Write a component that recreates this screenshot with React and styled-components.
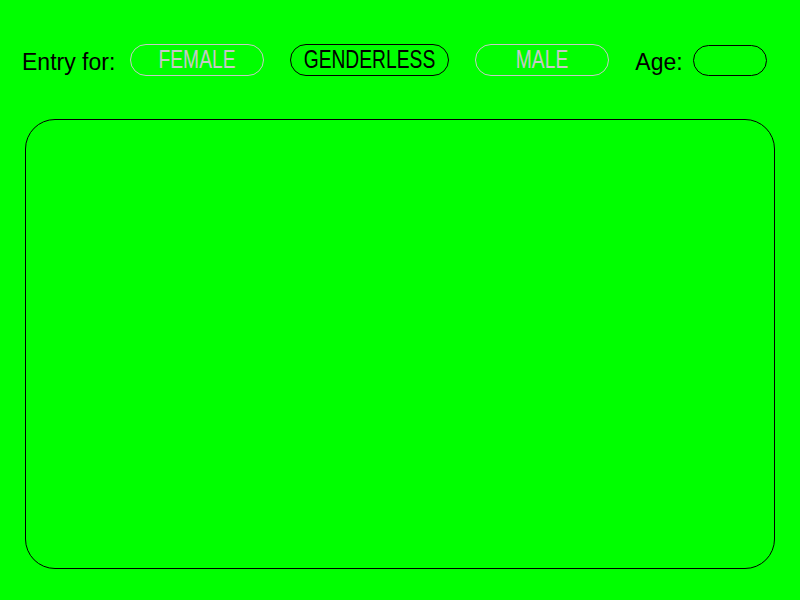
import React from "react";
import styled, { createGlobalStyle } from "styled-components";

const Global = createGlobalStyle`
  html, body { margin: 0; padding: 0; background: #00ff00; }
  body { font-family: "Liberation Sans", Arial, sans-serif; }
`;

const Page = styled.div`
  width: 800px;
  height: 600px;
  box-sizing: border-box;
  padding: 44px 0 0 22px;
  background: #00ff00;
  display: flex;
  flex-direction: column;
`;

const Header = styled.div`
  display: flex;
  align-items: center;
  height: 32px;
`;

const Label = styled.span`
  font-family: "Liberation Sans", Arial, sans-serif;
  font-size: 23px;
  color: #000;
  margin-right: ${(p) => p.$gap}px;
  position: relative;
  top: 2px;
  line-height: 1;
`;

const Choice = styled.button`
  box-sizing: border-box;
  width: ${(p) => p.$w}px;
  height: 32px;
  margin-right: 26px;
  border-radius: 16px;
  background: transparent;
  border: 1px solid ${(p) => (p.$active ? "#000" : "#c8c8c8")};
  color: ${(p) => (p.$active ? "#000" : "#c8c8c8")};
  font-family: "Liberation Sans", Arial, sans-serif;
  font-size: 25px;
  line-height: 1;
  padding: 0 0 1px;
  display: flex;
  align-items: center;
  justify-content: center;
  overflow: hidden;
  cursor: pointer;
`;

const ChoiceText = styled.span`
  display: inline-block;
  transform: scaleX(0.77);
  transform-origin: center;
  white-space: nowrap;
`;

const AgeInput = styled.input`
  box-sizing: border-box;
  width: 74px;
  height: 31px;
  border-radius: 16px;
  border: 1px solid #000;
  background: transparent;
  outline: none;
  padding: 0 12px;
  font-family: "Liberation Sans", Arial, sans-serif;
  font-size: 20px;
`;

const Panel = styled.div`
  box-sizing: border-box;
  margin: 43px 0 0 3px;
  width: 750px;
  height: 450px;
  border: 1px solid #000;
  border-radius: 30px;
`;

export default function App() {
  return (
    <>
      <Global />
      <Page>
        <Header>
          <Label $gap={15}>Entry for:</Label>
          <Choice $w={134}>
            <ChoiceText>FEMALE</ChoiceText>
          </Choice>
          <Choice $w={159} $active>
            <ChoiceText>GENDERLESS</ChoiceText>
          </Choice>
          <Choice $w={134}>
            <ChoiceText>MALE</ChoiceText>
          </Choice>
          <Label $gap={10}>Age:</Label>
          <AgeInput type="text" />
        </Header>
        <Panel />
      </Page>
    </>
  );
}
